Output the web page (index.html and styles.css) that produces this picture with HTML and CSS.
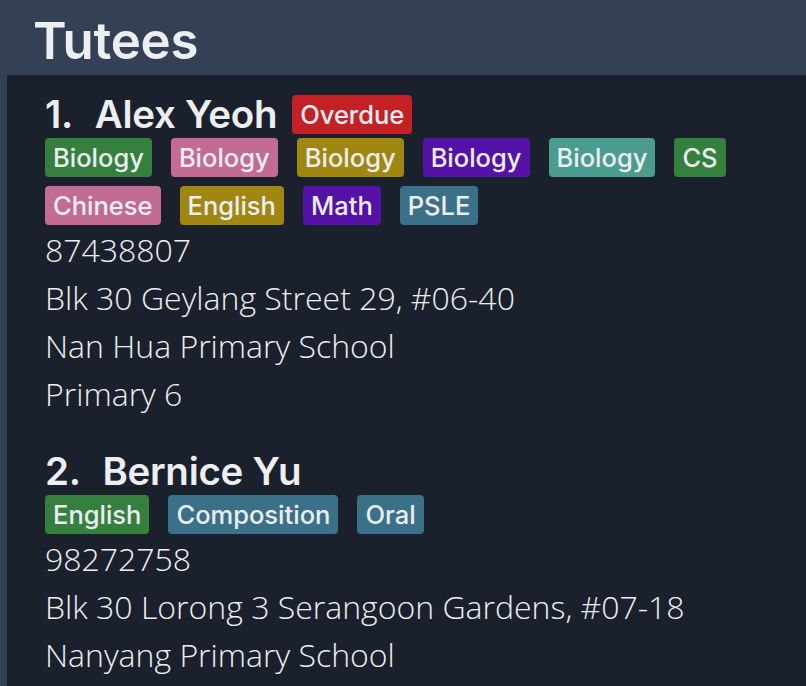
FILE: index.html
```html
<!DOCTYPE html>
<html>
<head>
<meta charset="utf-8">
<link rel="stylesheet" href="styles.css">
</head>
<body>
<div class="app">
  <header class="title">Tutees</header>
  <main class="list">
    <section class="card">
      <div class="name-row">
        <h2 class="name"><span class="idx">1.&nbsp; </span>Alex Yeoh</h2>
        <span class="tag red">Overdue</span>
      </div>
      <div class="tags">
        <span class="tag green">Biology</span>
        <span class="tag pink">Biology</span>
        <span class="tag olive">Biology</span>
        <span class="tag purple">Biology</span>
        <span class="tag teal">Biology</span>
        <span class="tag green">CS</span>
        <span class="tag pink">Chinese</span>
        <span class="tag olive">English</span>
        <span class="tag purple">Math</span>
        <span class="tag slate">PSLE</span>
      </div>
      <div class="detail">87438807</div>
      <div class="detail">Blk 30 Geylang Street 29, #06-40</div>
      <div class="detail">Nan Hua Primary School</div>
      <div class="detail">Primary 6</div>
    </section>
    <section class="card">
      <div class="name-row">
        <h2 class="name"><span class="idx">2.&nbsp; </span>Bernice Yu</h2>
      </div>
      <div class="tags">
        <span class="tag green">English</span>
        <span class="tag slate">Composition</span>
        <span class="tag slate">Oral</span>
      </div>
      <div class="detail">98272758</div>
      <div class="detail">Blk 30 Lorong 3 Serangoon Gardens, #07-18</div>
      <div class="detail">Nanyang Primary School</div>
    </section>
  </main>
</div>
</body>
</html>
```
FILE: styles.css
```css
html, body {
  margin: 0;
  padding: 0;
  height: 100%;
  overflow: hidden;
}
body {
  background: #344154;
  font-family: Inter, "Noto Sans", sans-serif;
  color: #eceef1;
}
.app {
  display: flex;
  flex-direction: column;
  height: 100%;
}
.title {
  height: 75px;
  box-sizing: border-box;
  padding: 8px 0 0 33px;
  font-size: 51px;
  font-weight: 600;
  line-height: 66px;
  letter-spacing: -0.3px;
}
.list {
  flex: 1;
  min-height: 0;
  overflow: hidden;
  margin-left: 7px;
  background: #1b212c;
  padding: 19px 0 0 38px;
}
.card {
  margin-bottom: 33px;
}
.name-row {
  display: flex;
  align-items: center;
  gap: 15px;
  height: 40px;
}
.name {
  margin: 0;
  font-size: 38.5px;
  font-weight: 600;
  line-height: 40px;
  letter-spacing: -0.3px;
  white-space: pre;
}
.idx {
  margin-right: 3px;
}
.tags {
  display: flex;
  flex-wrap: wrap;
  gap: 9px 19px;
  margin-top: 4px;
  margin-bottom: 1px;
  max-width: 720px;
}
.tag {
  display: inline-block;
  height: 39px;
  line-height: 39px;
  padding: 0 8px;
  border-radius: 4px;
  font-size: 25.5px;
  font-weight: 500;
  color: #eceef1;
}
.green { background: #35803f; }
.pink { background: #c26b93; }
.olive { background: #a08712; }
.purple { background: #5512a6; }
.teal { background: #4a9c8e; }
.slate { background: #3a7189; }
.red { background: #c42126; }
.detail {
  font-family: "Open Sans", "Noto Sans", sans-serif;
  font-weight: 300;
  font-size: 32px;
  line-height: 48px;
  white-space: nowrap;
}
```
